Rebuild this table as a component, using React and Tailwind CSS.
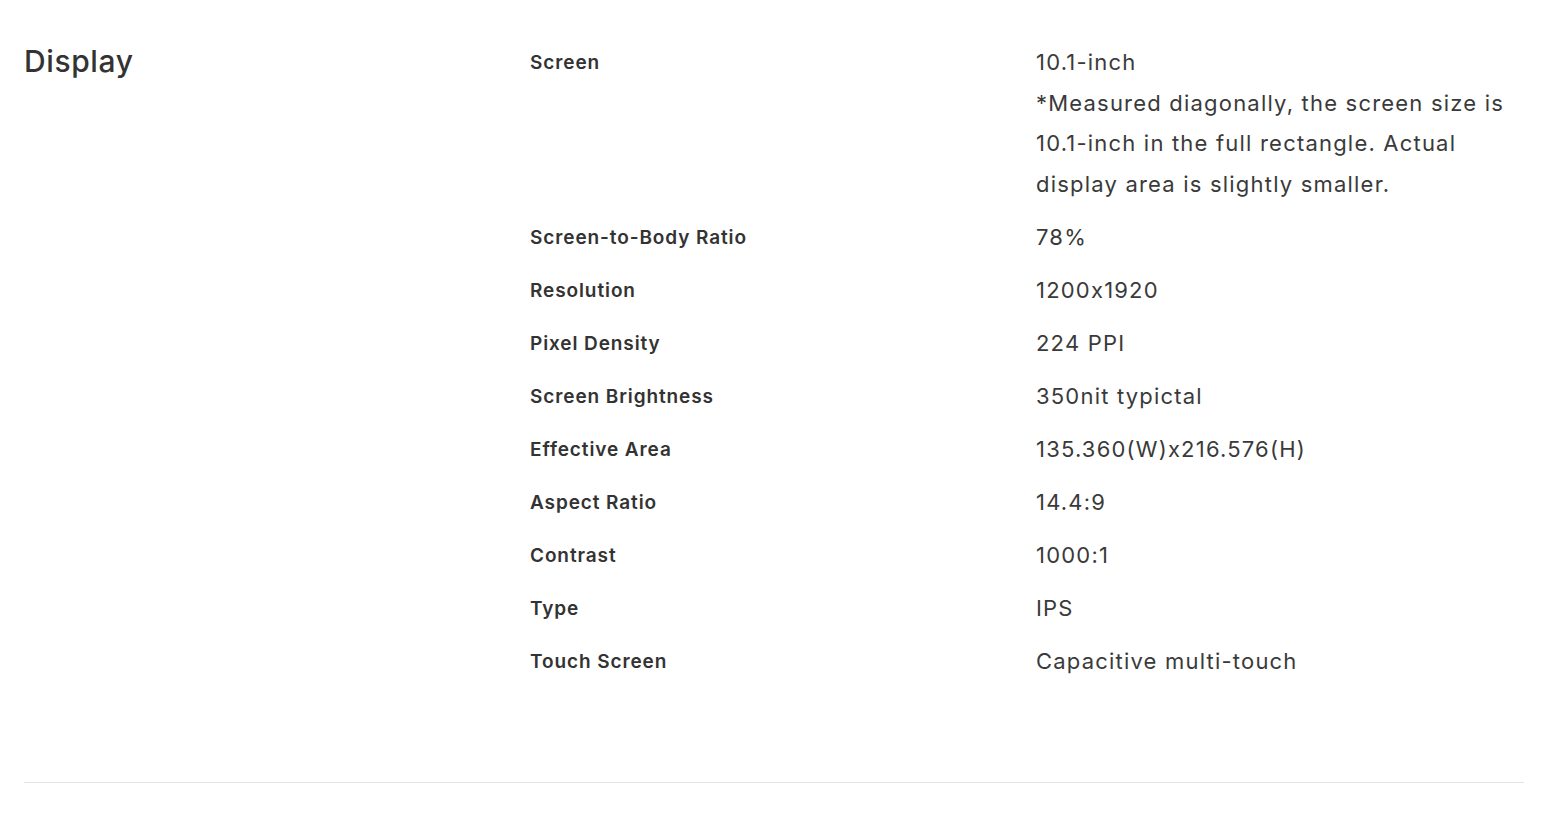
export default function App() {
  const rows = [
    ["Screen", ["10.1-inch", "*Measured diagonally, the screen size is", "10.1-inch in the full rectangle. Actual", "display area is slightly smaller."]],
    ["Screen-to-Body Ratio", ["78%"]],
    ["Resolution", ["1200x1920"]],
    ["Pixel Density", ["224 PPI"]],
    ["Screen Brightness", ["350nit typictal"]],
    ["Effective Area", ["135.360(W)x216.576(H)"]],
    ["Aspect Ratio", ["14.4:9"]],
    ["Contrast", ["1000:1"]],
    ["Type", ["IPS"]],
    ["Touch Screen", ["Capacitive multi-touch"]],
  ];
  return (
    <div className="min-h-[821px] bg-white px-[24px] pt-[42px] text-[#333] [font-feature-settings:'calt'_0]" style={{ fontFamily: "Inter, 'DejaVu Sans', sans-serif" }}>
      <div className="flex w-[1500px]">
        <div className="w-[506px] shrink-0">
          <h2 className="text-[30px] font-medium leading-[38px] tracking-[0.6px]">Display</h2>
        </div>
        <div className="flex flex-1 flex-col gap-[12.5px]">
          {rows.map(([label, vals]) => (
            <div key={label} className="flex">
              <div className="w-[506px] shrink-0 pt-[2px] text-[19px] font-semibold leading-[38.5px] tracking-[0.9px]">{label}</div>
              <div className="flex-1 text-[22px] font-normal leading-[40.5px] tracking-[1.2px] text-[#3a3a3a]">
                {vals.map((v, i) => (
                  <div key={i} className="whitespace-nowrap">{v}</div>
                ))}
              </div>
            </div>
          ))}
        </div>
      </div>
      <div className="mt-[101px] h-px w-[1500px] bg-[#e3e3e3]" />
    </div>
  );
}
